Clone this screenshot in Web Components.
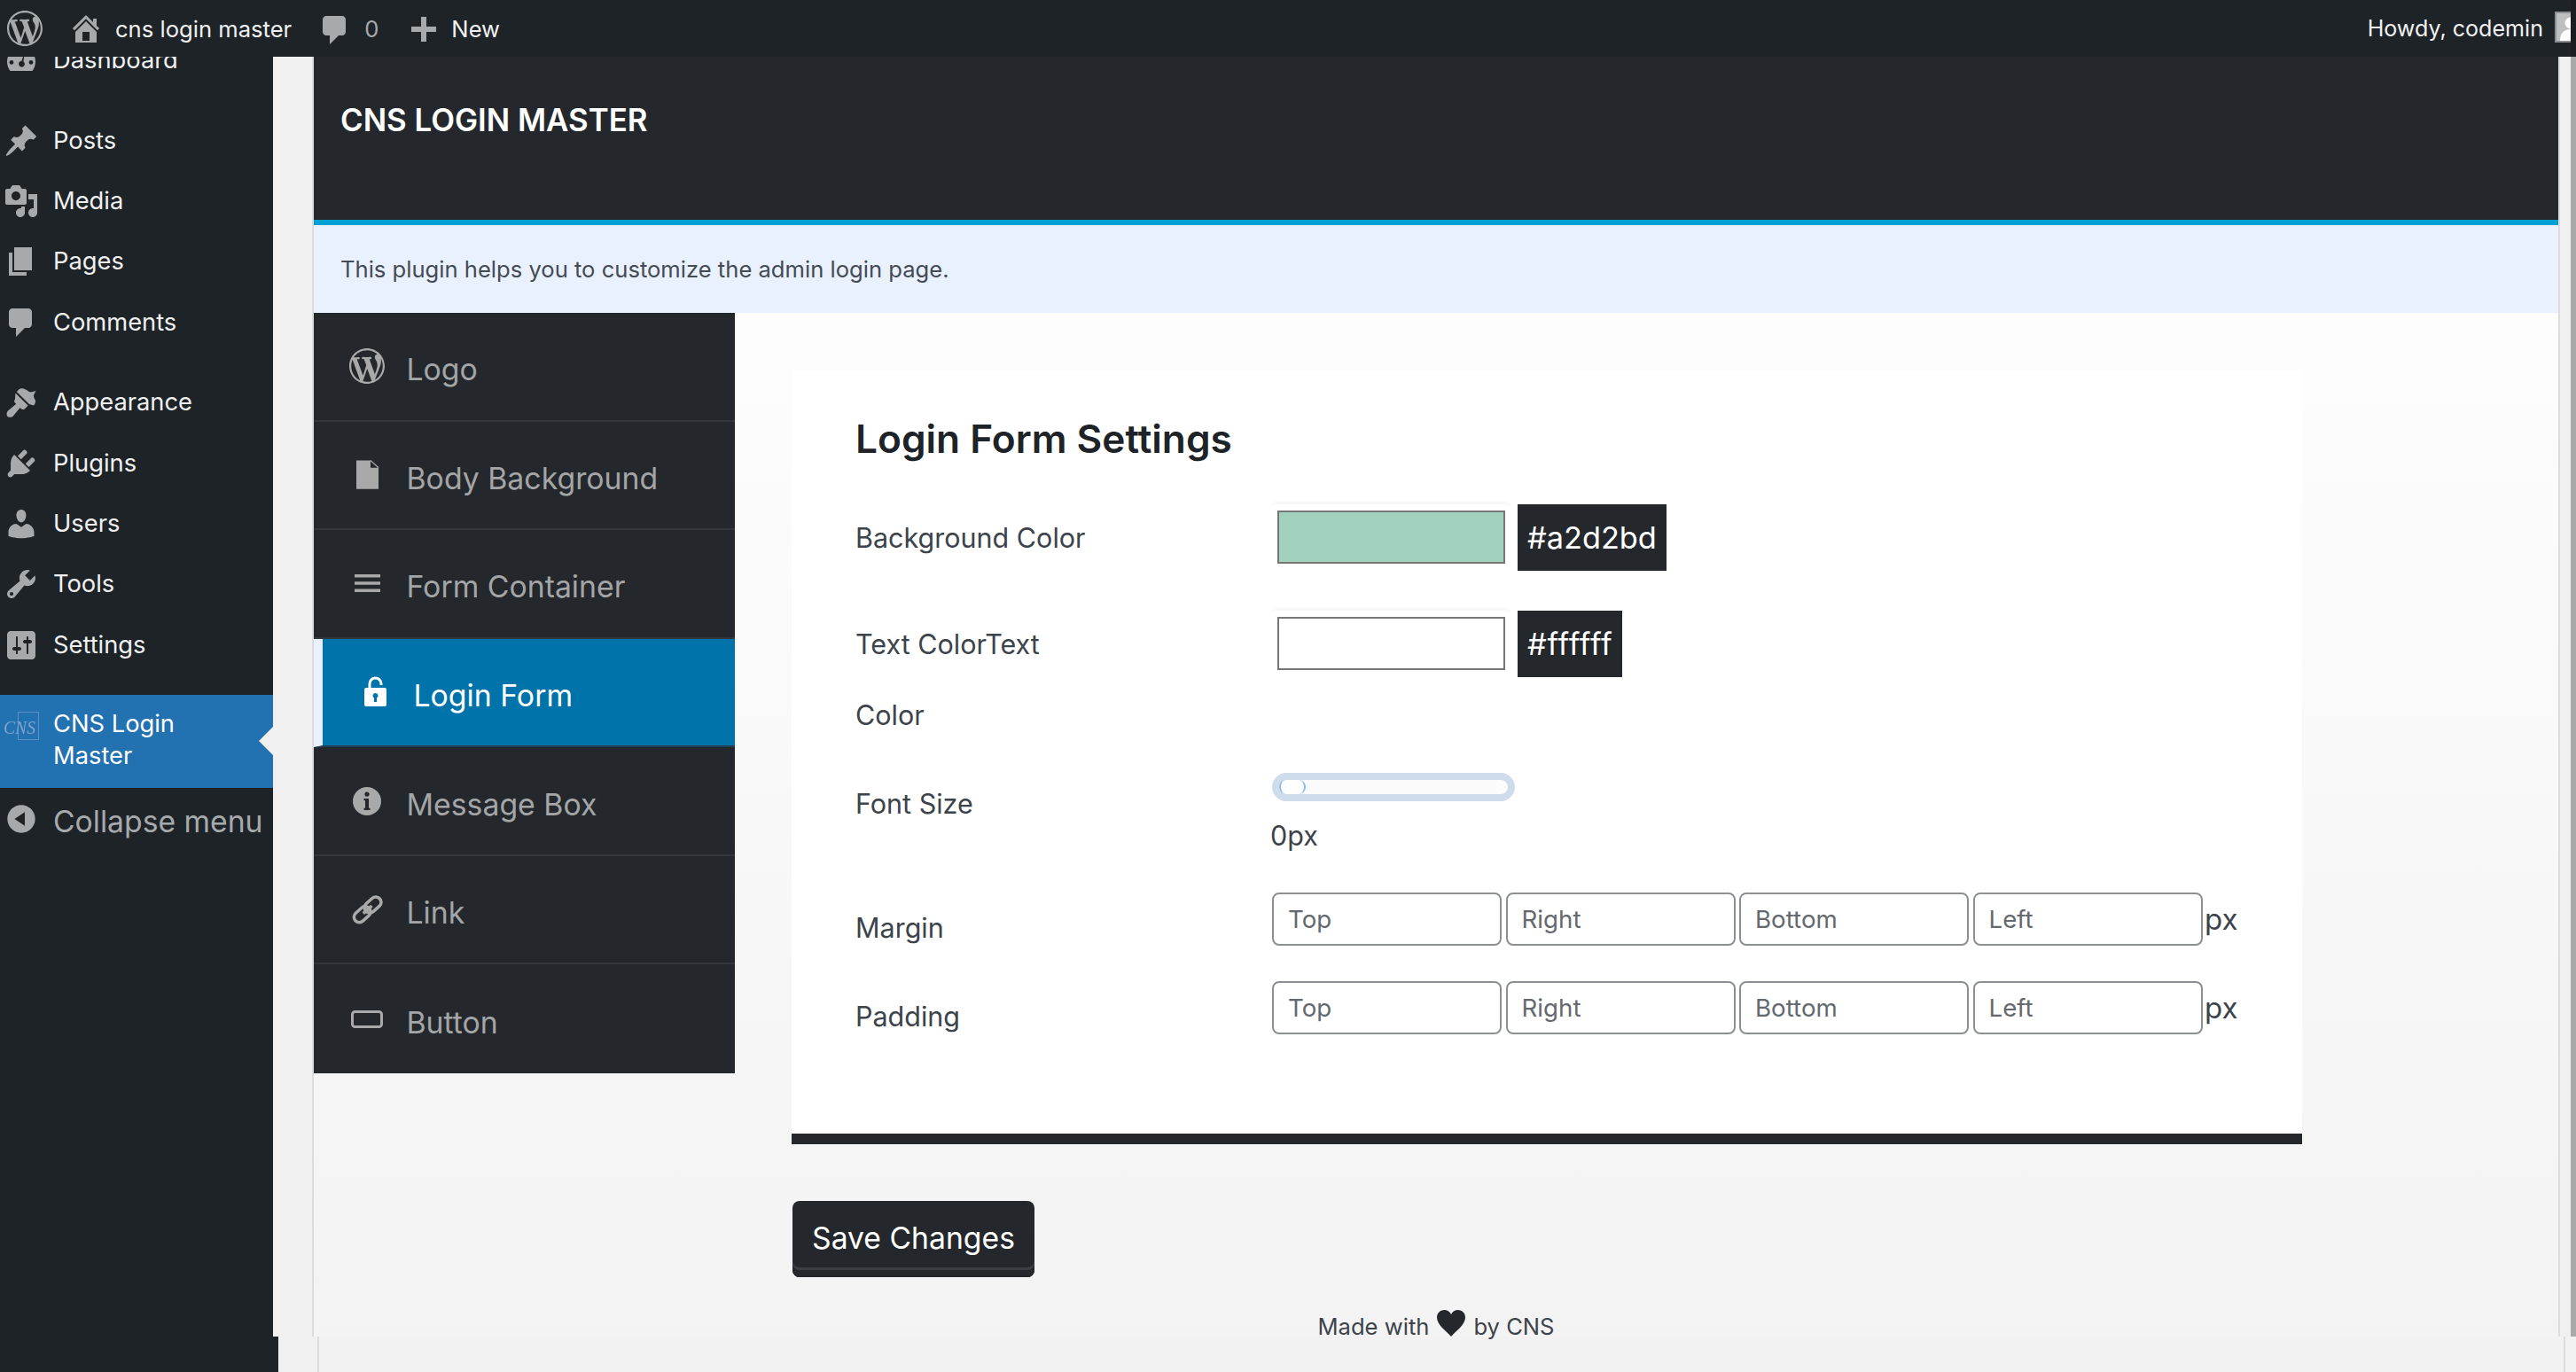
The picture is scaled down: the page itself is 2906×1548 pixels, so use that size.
<!DOCTYPE html>
<html>
<head>
<meta charset="utf-8">
<title>CNS Login Master</title>
<style>
  html, body { margin: 0; height: 100%; overflow: hidden; background: #f2f2f2; }
  body { font-family: Inter, "Liberation Sans", sans-serif; }
</style>
</head>
<body>
<wp-page>
  <wp-adminbar slot="bar"></wp-adminbar>
  <wp-sidebar slot="side">
    <wp-menu-item icon="dashboard">Dashboard</wp-menu-item>
    <wp-menu-item icon="post" class="gap">Posts</wp-menu-item>
    <wp-menu-item icon="media">Media</wp-menu-item>
    <wp-menu-item icon="page">Pages</wp-menu-item>
    <wp-menu-item icon="comment">Comments</wp-menu-item>
    <wp-menu-item icon="appearance" class="gap">Appearance</wp-menu-item>
    <wp-menu-item icon="plugins">Plugins</wp-menu-item>
    <wp-menu-item icon="users">Users</wp-menu-item>
    <wp-menu-item icon="tools">Tools</wp-menu-item>
    <wp-menu-item icon="settings">Settings</wp-menu-item>
    <wp-menu-item icon="cns" active class="gap">CNS Login<br>Master</wp-menu-item>
    <wp-menu-item icon="collapse" collapse>Collapse menu</wp-menu-item>
  </wp-sidebar>
  <cns-header>CNS LOGIN MASTER</cns-header>
  <cns-notice>This plugin helps you to customize the admin login page.</cns-notice>
  <cns-body>
    <cns-tabs slot="tabs">
      <cns-tab icon="wp">Logo</cns-tab>
      <cns-tab icon="doc">Body Background</cns-tab>
      <cns-tab icon="menu">Form Container</cns-tab>
      <cns-tab icon="lock" active>Login Form</cns-tab>
      <cns-tab icon="info">Message Box</cns-tab>
      <cns-tab icon="link">Link</cns-tab>
      <cns-tab icon="button">Button</cns-tab>
    </cns-tabs>
    <cns-panel heading="Login Form Settings">
      <cns-row style="--top:44px;--height:80px">
        <span slot="label">Background Color</span>
        <cns-color value="#a2d2bd"></cns-color>
      </cns-row>
      <cns-row style="--top:40px;--height:160px">
        <span slot="label">Text ColorText<br>Color</span>
        <cns-color value="#ffffff" style="--spacing:.75px"></cns-color>
      </cns-row>
      <cns-row style="--top:20px;--height:97px">
        <span slot="label">Font Size</span>
        <cns-slider>0px</cns-slider>
      </cns-row>
      <cns-row style="--top:43px;--height:80px">
        <span slot="label">Margin</span>
        <cns-sides></cns-sides>
      </cns-row>
      <cns-row style="--top:20px;--height:80px">
        <span slot="label">Padding</span>
        <cns-sides></cns-sides>
      </cns-row>
    </cns-panel>
    <cns-button slot="action">Save Changes</cns-button>
  </cns-body>
  <cns-footer></cns-footer>
</wp-page>
<script>
const WP_LOGO = 'M20 10c0-5.51-4.49-10-10-10C4.480 0 0 4.490 0 10c0 5.520 4.480 10 10 10 5.510 0 10-4.480 10-10zM7.780 15.370L4.370 6.220c.55-.02 1.170-.08 1.170-.08.5-.06.44-1.130-.06-1.110 0 0-1.450.11-2.370.11-.18 0-.37 0-.58-.01C4.120 2.690 6.890 1.100 10 1.100c2.330 0 4.450.87 6.050 2.340-.68-.11-1.650.39-1.650 1.580 0 .74.45 1.360.9 2.100.35.61.55 1.360.55 2.460 0 1.490-1.400 5-1.400 5l-3.030-8.370c.54-.02.82-.17.82-.17.5-.05.44-1.250-.06-1.220 0 0-1.440.12-2.380.12-.87 0-2.330-.12-2.330-.12-.5-.03-.56 1.200-.06 1.220l.92.080 1.260 3.410zM17.410 10c.24-.64.740-1.870.430-4.250.7 1.290 1.050 2.710 1.050 4.250 0 3.290-1.730 6.240-4.400 7.780.97-2.590 1.940-5.200 2.920-7.780zM6.100 18.090C3.120 16.650 1.110 13.530 1.110 10c0-1.300.23-2.480.72-3.590C3.250 10.300 4.670 14.200 6.100 18.090zm4.030-6.630l2.580 6.980c-.86.29-1.760.45-2.710.45-.79 0-1.570-.11-2.290-.33.81-2.380 1.620-4.740 2.420-7.100z';

const ICONS = {
  wp: `<path d="${WP_LOGO}"/>`,
  home: '<path d="M16 8.500l1.530 1.530-1.060 1.060L10 4.620l-6.470 6.470-1.060-1.060L10 2.500l4 4v-2h2v4zm-6-2.460l6 5.990V18H4v-5.970zM12 17v-5H8v5h4z"/>',
  comment: '<path d="M5 2h9c1.100 0 2 .9 2 2v7c0 1.100-.9 2-2 2h-2l-5 5v-5H5c-1.100 0-2-.9-2-2V4c0-1.100.9-2 2-2z"/>',
  plus: '<path d="M17 8.500v3h-5.500V17h-3v-5.500H3v-3h5.500V3h3v5.500z"/>',
  dashboard: '<path fill-rule="evenodd" d="M3.760 16h12.480c1.100-1.430 1.760-3.210 1.760-5.140C18 6.100 14.400 2.300 10 2.300S2 6.100 2 10.860c0 1.930.66 3.710 1.760 5.140zM4.500 10a1.200 1.200 0 1 1 0 2.400 1.200 1.200 0 0 1 0-2.400zm11 0a1.200 1.200 0 1 1 0 2.400 1.200 1.200 0 0 1 0-2.400zM10.200 10.400l.9-2.600.5.200-.4 2.800c.5.400.8 1 .7 1.600-.2 1-1.100 1.600-2 1.400-.9-.2-1.500-1.100-1.300-2 .1-.8.800-1.400 1.600-1.400z"/>',
  post: '<path d="M10.440 3.020l1.820-1.820 6.360 6.350-1.830 1.820c-1.050-.68-2.480-.57-3.410.36l-.75.750c-.92.930-1.040 2.350-.35 3.410l-1.830 1.820-2.410-2.410-2.800 2.790c-.42.420-3.380 2.710-3.800 2.290s1.860-3.390 2.280-3.810l2.790-2.790L4.100 9.360l1.830-1.820c1.050.69 2.480.57 3.400-.36l.75-.75c.93-.92 1.050-2.350.36-3.410z"/>',
  media: '<path d="M13 11V4c0-.55-.45-1-1-1h-1.670L9 1H5L3.670 3H2c-.55 0-1 .45-1 1v7c0 .55.45 1 1 1h10c.55 0 1-.45 1-1zM7 4.500c1.380 0 2.500 1.120 2.500 2.500S8.380 9.500 7 9.500 4.500 8.380 4.500 7 5.620 4.500 7 4.500zM14 6h5v10.500c0 1.380-1.120 2.500-2.500 2.500S14 17.880 14 16.500s1.120-2.500 2.500-2.500c.17 0 .34.020.5.050V9h-3V6zm-4 8.050V13h2v3.500c0 1.380-1.120 2.500-2.500 2.500S7 17.880 7 16.500 8.120 14 9.500 14c.17 0 .34.020.5.050z"/>',
  page: '<path d="M6 15V2h10v13H6zm-1 1h8v2H3V5h2v11z"/>',
  appearance: '<path d="M14.500 11L7.400 4l1.500-1.500c.5-.6 2.300-.5 3.600.3 1.300.8 2 1.400 2.600 1.400.6 0 3.100-.7 3.100-.7s-1.200 2.200-1.200 3c0 .8.600 1.300 1 2.600.1.800-.3 2-1 2.600zM6.700 4.700l7.100 7.100-1.800 1.800c-.6.6-1.500.5-2.100 0l-.6-.6-3.800 4.600c-.8 1-2.700 1-3.300.3-.6-.6-.6-2.300.3-3.100l4.600-3.900-.6-.6c-.6-.6-.6-1.500 0-2.100z"/>',
  plugins: '<path d="M13.110 4.360L9.870 7.600 8 5.730l3.240-3.240c.35-.34 1.050-.2 1.560.32.52.51.66 1.210.31 1.550zm-8 1.770l.91-1.120 9.010 9.010-1.190.84c-.71.71-2.630 1.160-3.820 1.160H6.140L4.900 17.260c-.59.59-1.540.59-2.120 0-.59-.58-.59-1.530 0-2.120l1.240-1.240v-3.880c0-1.130.4-3.190 1.090-3.890zm7.260 3.970l3.240-3.240c.34-.35 1.040-.21 1.550.31.52.51.66 1.210.31 1.550l-3.240 3.250z"/>',
  users: '<path d="M10 9.250c-2.270 0-2.730-3.440-2.730-3.440C7 4.020 7.820 2 9.970 2c2.160 0 2.980 2.020 2.710 3.810 0 0-.41 3.440-2.680 3.440zm0 2.570L12.720 10c2.390 0 4.520 2.330 4.520 4.530v2.490s-3.650 1.130-7.240 1.130c-3.650 0-7.240-1.130-7.240-1.130v-2.490c0-2.250 1.940-4.480 4.470-4.480z"/>',
  tools: '<path d="M16.680 9.770c-1.340 1.340-3.300 1.670-4.950.99l-5.410 6.520c-.99.99-2.590.99-3.580 0s-.99-2.590 0-3.570l6.520-5.420c-.68-1.650-.35-3.610.99-4.950 1.280-1.280 3.120-1.620 4.720-1.060l-2.890 2.890 2.820 2.820 2.860-2.870c.53 1.580.18 3.400-1.080 4.650zM3.810 16.210c.4.390 1.040.39 1.430 0 .4-.4.400-1.040 0-1.430-.39-.4-1.030-.4-1.430 0-.39.39-.39 1.030 0 1.430z"/>',
  settings: '<path d="M18 16V4c0-1.100-.9-2-2-2H4c-1.100 0-2 .9-2 2v12c0 1.100.9 2 2 2h12c1.100 0 2-.9 2-2zM8 11h1c.55 0 1 .45 1 1s-.45 1-1 1H8v1.500c0 .28-.22.5-.5.5s-.5-.22-.5-.5V13H6c-.55 0-1-.45-1-1s.45-1 1-1h1V5.500c0-.28.22-.5.5-.5s.5.22.5.5V11zm5-2h-1c-.55 0-1-.45-1-1s.45-1 1-1h1V5.500c0-.28.22-.5.5-.5s.5.22.5.5V7h1c.55 0 1 .45 1 1s-.45 1-1 1h-1v5.500c0 .28-.22.5-.5.5s-.5-.22-.5-.5V9z"/>',
  collapse: '<path d="M10 2.160c4.330 0 7.840 3.510 7.840 7.840s-3.510 7.840-7.840 7.840S2.160 14.330 2.160 10 5.670 2.160 10 2.160zm2 11.720V6.120L6.180 10z"/>',
};

// tab and logo icons are drawn on a 40 unit box
const ICONS_40 = {
  cns: `<g filter="url(#soft)"><rect x="16.500" y="4.500" width="23" height="31" fill="none" stroke="#5f8fc4" stroke-width="1"/>
    <text x="0" y="29" font-family="'Liberation Serif',serif" font-style="italic" font-size="22" fill="#7da3ce" textLength="36" lengthAdjust="spacingAndGlyphs">CNS</text></g>
    <defs><filter id="soft"><feGaussianBlur stdDeviation=".5"/></filter></defs>`,
  doc: '<path d="M8 3.500h16v8.200h9v24H8z"/><path d="M24 3.500l9 8.200" stroke="currentColor" stroke-width="1.200"/>',
  menu: '<path d="M6 10h29v3.500H6zM6 18.200h29v3.600H6zM6 26.500h29V30H6z"/>',
  lock: '<path fill-rule="evenodd" d="M10 15h21a2 2 0 0 1 2 2v17a2 2 0 0 1-2 2H10a2 2 0 0 1-2-2V17a2 2 0 0 1 2-2zm10.500 6a3 3 0 0 0-1.500 5.600V31h3v-4.400a3 3 0 0 0-1.500-5.600z"/><path d="M14 16v-5.500a6.500 6.500 0 0 1 13 0v1.500" fill="none" stroke="currentColor" stroke-width="3"/>',
  info: '<path fill-rule="evenodd" d="M20 4a16 16 0 1 1 0 32 16 16 0 0 1 0-32zm0 5.500a2.600 2.600 0 1 0 0 5.200 2.600 2.600 0 0 0 0-5.200zM16.500 17v2.200h1.500v8.600h-1.500V30h7v-2.200H22V17z"/>',
  link: '<g fill="none" stroke="currentColor" stroke-width="3.600" transform="rotate(-42 21 20)"><rect x="2" y="14" width="21" height="12" rx="6"/><rect x="18" y="14" width="21" height="12" rx="6"/><path d="M14 20h13"/></g>',
  button: '<rect x="3.500" y="11.500" width="33" height="17" rx="3" fill="none" stroke="currentColor" stroke-width="3"/>',
};

class Shadowed extends HTMLElement {
  constructor() {
    super();
    this.attachShadow({mode: 'open'});
  }

  render(css, html) {
    this.shadowRoot.innerHTML = `<style>${css}</style>${html}`;
  }
}

class CnsIcon extends Shadowed {
  connectedCallback() {
    const name = this.getAttribute('name');
    const size = this.getAttribute('size') || 40;
    const body = ICONS_40[name];
    const svg = body
      ? `<svg viewBox="0 0 40 40" width="${size}" height="${size}">${body}</svg>`
      : `<svg viewBox="0 0 20 20" width="${size}" height="${size}">${ICONS[name]}</svg>`;
    this.render(`:host{display:block;flex:none;width:${size}px;height:${size}px;color:inherit}
      svg{display:block;fill:currentColor;overflow:visible}`, svg);
  }
}
customElements.define('cns-icon', CnsIcon);

class WpPage extends Shadowed {
  connectedCallback() {
    this.render(`
      :host{display:flex;flex-direction:column;position:relative;height:1548px;width:2906px;overflow:hidden;background:#f2f2f2}
      .middle{display:flex;height:1444px}
      .gutter-left{flex:none;width:44px;background:#f0f0f1;border-right:2px solid #dcdcde}
      .content{flex:none;width:2532px;display:flex;flex-direction:column;background:linear-gradient(#fdfdfd 289px,#f3f3f3 100%)}
      .gutter-right{flex:1;background:#f0f0f1;border-left:2px solid #dcdcde}
      .bottom{display:flex;flex:1}
      .bottom .dark{flex:none;width:314px;background:#1d2327}
      .bottom .gutter-left{width:44px}
      .bottom .rest{flex:none;width:2532px}
      .bottom .end{flex:1;border-left:2px solid #dcdcde}
      .scroll{position:absolute;top:0;right:0;width:6px;height:1508px;background:#a9a9a9}
      .scroll::before{content:"";display:block;height:64px;background:#191c20}
    `, `
      <slot name="bar"></slot>
      <div class="middle">
        <slot name="side"></slot>
        <div class="gutter-left"></div>
        <div class="content"><slot></slot></div>
        <div class="gutter-right"></div>
      </div>
      <div class="bottom">
        <div class="dark"></div>
        <div class="gutter-left"></div>
        <div class="rest"></div>
        <div class="end"></div>
      </div>
      <div class="scroll"></div>
    `);
  }
}
customElements.define('wp-page', WpPage);

class WpAdminbar extends Shadowed {
  connectedCallback() {
    this.render(`
      :host{display:flex;align-items:center;flex:none;height:64px;background:#1d2327;color:#f0f0f1;font-size:25.600px;overflow:hidden;padding-left:8px;white-space:nowrap}
      cns-icon{color:#a7aaad}
      .home{margin-left:29px}
      .site{margin-left:13px}
      .bubble{margin-left:29px;margin-top:4px}
      .count{margin-left:13px;color:#a7aaad}
      .plus{margin-left:31px;margin-top:2px}
      .new{margin-left:11px}
      .howdy{margin-left:auto;margin-right:13px;font-size:25.100px}
      .avatar{flex:none;box-sizing:border-box;width:36px;height:35px;margin-right:-12px;margin-top:-3px;border:2px solid #8c8f94;background:#bdbec0;overflow:hidden}
      .avatar svg{display:block;fill:#fff}
    `, `
      <cns-icon name="wp"></cns-icon>
      <cns-icon class="home" name="home"></cns-icon>
      <span class="site">cns login master</span>
      <cns-icon class="bubble" name="comment"></cns-icon>
      <span class="count">0</span>
      <cns-icon class="plus" name="plus"></cns-icon>
      <span class="new">New</span>
      <span class="howdy">Howdy, codemin</span>
      <div class="avatar"><svg viewBox="0 0 32 31" width="32" height="31"><circle cx="16" cy="11" r="6.500"/><path d="M4 31c0-8 4-13 12-13s12 5 12 13z"/></svg></div>
    `);
  }
}
customElements.define('wp-adminbar', WpAdminbar);

class WpSidebar extends Shadowed {
  connectedCallback() {
    this.render(`
      :host{display:block;flex:none;width:308px;background:#1d2327;overflow:hidden}
      .list{display:flex;flex-direction:column;margin-top:-30px}
      ::slotted(.gap){margin-top:22px}
    `, '<div class="list"><slot></slot></div>');
  }
}
customElements.define('wp-sidebar', WpSidebar);

class WpMenuItem extends Shadowed {
  connectedCallback() {
    const active = this.hasAttribute('active');
    this.render(`
      :host{display:flex;position:relative;align-items:center;gap:16px;box-sizing:border-box;height:68.400px;padding-left:4px;color:#f0f0f1;font-size:27.300px;white-space:nowrap}
      cns-icon{color:#a7aaad}
      span{margin-top:-1px}
      :host([active]){height:105px;background:#2271b1;color:#fff;align-items:flex-start;padding-top:15px;line-height:36px;margin-bottom:4px}
      :host([active]) span{margin-top:0}
      :host([collapse]){color:#a7aaad;font-size:33.700px}
      :host([collapse]) cns-icon{margin-bottom:6px}
      .arrow{position:absolute;right:0;top:36px;width:0;height:0;border:16.500px solid transparent;border-left:0;border-right-color:#f0f0f1}
    `, `<cns-icon name="${this.getAttribute('icon')}"></cns-icon><span><slot></slot></span>${active ? '<i class="arrow"></i>' : ''}`);
  }
}
customElements.define('wp-menu-item', WpMenuItem);

class CnsHeader extends Shadowed {
  connectedCallback() {
    this.render(`
      :host{display:block;flex:none;box-sizing:border-box;height:190px;padding:41px 30px 0;background:#24282c;border-bottom:6px solid #00a0d2;color:#fff;font-size:34.850px;font-weight:600;line-height:60px}
    `, '<slot></slot>');
  }
}
customElements.define('cns-header', CnsHeader);

class CnsNotice extends Shadowed {
  connectedCallback() {
    this.render(`
      :host{display:flex;align-items:center;flex:none;height:99px;padding-left:30px;background:#e9f0fe;color:#444b52;font-size:25.600px}
    `, '<slot></slot>');
  }
}
customElements.define('cns-notice', CnsNotice);

class CnsBody extends Shadowed {
  connectedCallback() {
    this.render(`
      :host{display:flex;align-items:flex-start;gap:64px}
      .main{display:flex;flex-direction:column;padding-top:64px}
    `, '<slot name="tabs"></slot><div class="main"><slot></slot><slot name="action"></slot></div>');
  }
}
customElements.define('cns-body', CnsBody);

class CnsTabs extends Shadowed {
  connectedCallback() {
    this.render(`
      :host{display:grid;grid-auto-rows:122.570px;flex:none;width:475px;background:#24282c}
    `, '<slot></slot>');
  }
}
customElements.define('cns-tabs', CnsTabs);

class CnsTab extends Shadowed {
  connectedCallback() {
    this.render(`
      :host{display:flex;align-items:center;gap:24.500px;box-sizing:border-box;padding-left:40px;border-bottom:2px solid #32373b;color:#a3a5a7;font-size:33.800px;white-space:nowrap}
      cns-icon{color:#a9a9a9}
      :host(:last-child){border-bottom:0}
      :host([active]){gap:23.500px;padding-left:39px;border-left:10px solid #e9f0fe;border-bottom:2px solid #1f3f55;background:#0073aa;color:#fff}
      :host([active]) cns-icon{color:#fff}
      span{padding-top:7px}
    `, `<cns-icon name="${this.getAttribute('icon')}"></cns-icon><span><slot></slot></span>`);
  }
}
customElements.define('cns-tab', CnsTab);

class CnsPanel extends Shadowed {
  connectedCallback() {
    this.render(`
      :host{display:flex;flex-direction:column;flex:none;box-sizing:border-box;width:1704px;padding:50px 0 92px 72px;background:#fff;border-bottom:12px solid #24282c}
      h2{margin:0;font-size:44.200px;font-weight:600;line-height:56px;color:#1d2327}
    `, `<h2>${this.getAttribute('heading')}</h2><slot></slot>`);
  }
}
customElements.define('cns-panel', CnsPanel);

class CnsRow extends Shadowed {
  connectedCallback() {
    this.render(`
      :host{display:grid;grid-template-columns:468px 1fr;margin-top:var(--top);height:var(--height);color:#3c434a;font-size:30.500px;line-height:80px}
    `, '<slot name="label"></slot><div><slot></slot></div>');
  }
}
customElements.define('cns-row', CnsRow);

class CnsColor extends Shadowed {
  connectedCallback() {
    const value = this.getAttribute('value');
    this.render(`
      :host{display:flex;align-items:flex-start;margin-top:-1px;line-height:normal}
      .frame{box-sizing:border-box;width:272px;height:78px;padding:7px 7px 0 8px;border-top:3px solid #f7f7f7;border-radius:8px}
      .swatch{box-sizing:border-box;width:257px;height:60px;border:2.500px solid #767676}
      .chip{display:flex;align-items:center;height:75px;margin:3px 0 0 7px;padding:0 11px;background:#24282c;color:#fff;font-size:34.300px;letter-spacing:var(--spacing,0)}
    `, `<div class="frame"><div class="swatch" style="background:${value}"></div></div><div class="chip">${value}</div>`);
  }
}
customElements.define('cns-color', CnsColor);

class CnsSlider extends Shadowed {
  connectedCallback() {
    this.render(`
      :host{display:block;line-height:40px}
      .track{display:flex;box-sizing:border-box;width:274px;height:32px;margin:5px 0 19px 2px;border:8px solid #cfdce9;border-radius:16px;background:#fbfbfb}
      .thumb{box-sizing:border-box;width:30px;height:16px;background:#fff;border-left:2px solid #8ab8f0;border-right:2px solid #8ab8f0;border-radius:8px/8px}
    `, '<div class="track"><div class="thumb"></div></div><slot></slot>');
  }
}
customElements.define('cns-slider', CnsSlider);

class CnsSides extends Shadowed {
  connectedCallback() {
    const boxes = ['Top', 'Right', 'Bottom', 'Left'].map((t) => `<div class="box">${t}</div>`).join('');
    this.render(`
      :host{display:flex;align-items:center;gap:4.500px;height:60px;padding-left:2px;line-height:60px}
      .box{box-sizing:border-box;display:flex;align-items:center;width:259px;height:60px;padding-left:16px;border:2px solid #8c8f94;border-radius:8px;background:#fff;color:#646970;font-size:27.700px}
      .unit{margin-left:-2px;font-size:33px;margin-top:-1px}
    `, `${boxes}<span class="unit">px</span>`);
  }
}
customElements.define('cns-sides', CnsSides);

class CnsButton extends Shadowed {
  connectedCallback() {
    this.render(`
      :host{display:flex;align-items:center;justify-content:center;box-sizing:border-box;width:273px;height:86px;margin:64px 0 0 1px;padding-bottom:3px;border-radius:8px;background:#24282c;box-shadow:inset 0 -8px 0 #24282c,inset 0 -11px 0 #3a4046;color:#fff;font-size:33.700px}
    `, '<slot></slot>');
  }
}
customElements.define('cns-button', CnsButton);

class CnsFooter extends Shadowed {
  connectedCallback() {
    this.render(`
      :host{display:flex;justify-content:center;align-items:center;flex:none;height:40px;margin-top:35px;color:#3c434a;font-size:25.600px}
      svg{display:block;flex:none;margin:-7px 9px 0 9px;fill:#24282c}
    `, `<span>Made with</span><svg viewBox="0 0 32 30" width="32" height="30"><path d="M16 30C11 24 0 17 0 8.500 0 3.500 3.800 0 8.200 0 11.500 0 14.500 1.800 16 5 17.500 1.800 20.500 0 23.800 0 28.200 0 32 3.500 32 8.500 32 17 21 24 16 30z"/></svg><span>by CNS</span>`);
  }
}
customElements.define('cns-footer', CnsFooter);
</script>
</body>
</html>
